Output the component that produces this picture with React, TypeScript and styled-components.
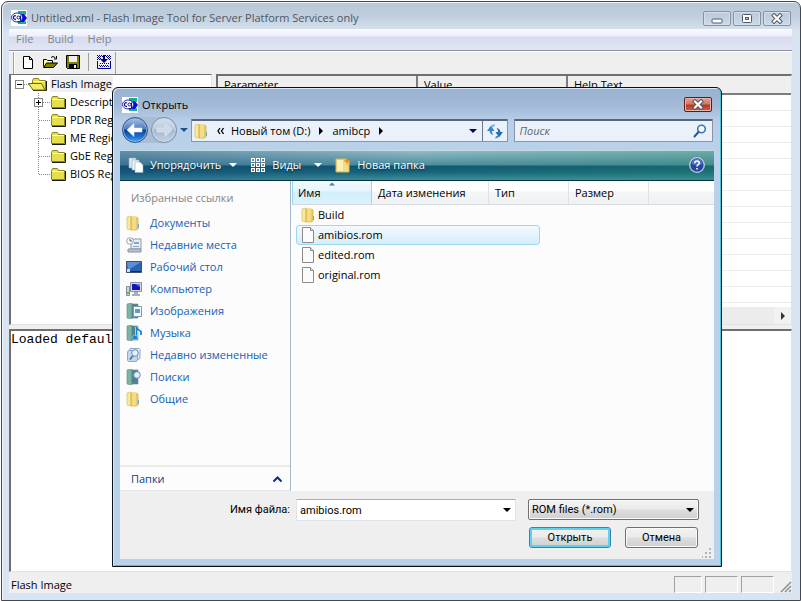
import React from "react";
import styled, { createGlobalStyle, css } from "styled-components";

const ui = `"Open Sans", "Noto Sans", sans-serif`;
const classic = `Roboto, "Liberation Sans", sans-serif`;

const GlobalStyle = createGlobalStyle`
  *, *::before, *::after { box-sizing: border-box; }
  body { margin: 0; background: #fff; font: 11px/16px ${ui}; color: #000; overflow: hidden; }
  button, input, select { font: inherit; color: inherit; margin: 0; padding: 0; }
  svg { display: block; flex: none; }
  ul { list-style: none; margin: 0; padding: 0; }
`;

/* ---------- main window ---------- */

const Desktop = styled.div`
  position: relative;
  min-height: 100vh;
  padding: 1px 0 0 1px;
  display: flex;
`;

const AppWindow = styled.main`
  flex: 1;
  min-width: 0;
  display: flex;
  flex-direction: column;
  padding: 0 8px 7px 7px;
  border: 1px solid #45484e;
  border-radius: 7px 7px 0 0;
  background: linear-gradient(#b8c8d8 0, #bfcddc 14px, #d8e4f1 30px);
  box-shadow: inset 1px 1px 0 #eef4fa;
`;

const TitleBar = styled.header`
  display: flex;
  align-items: center;
  height: 27px;
  padding: 5px 1px 0 2px;
  gap: 4px;
  color: #4c5866;
`;

const Title = styled.h1`
  flex: 1;
  margin: 0;
  font-size: 11px;
  font-weight: 400;
  white-space: nowrap;
`;

const CaptionButtons = styled.div`
  display: flex;
  gap: 2px;
`;

const CaptionButton = styled.button`
  display: grid;
  place-items: center;
  width: 28px;
  height: 15px;
  border: 1px solid #8592a5;
  border-radius: 2px;
  background: transparent;
  box-shadow: inset 0 0 0 1px #d6e0ec;
`;

const MenuBar = styled.nav`
  display: flex;
  height: 22px;
  gap: 14px;
  padding: 1px 7px 3px;
  border-bottom: 1px solid #8e93a0;
  background: linear-gradient(#fafbfe 0, #eceef9 7px, #d8dbf0 8px, #e2e5f5 20px);
`;

const MenuItem = styled.button`
  border: 0;
  background: none;
  color: #80858c;
`;

const ToolStrip = styled.div`
  display: flex;
  align-items: center;
  height: 23px;
  border-top: 1px solid #fff;
  background: #efefef;
  padding-left: 4px;
`;

const ToolGroup = styled.div`
  display: flex;
  align-items: center;
  align-self: stretch;
  gap: 7px;
  padding: 0 3px 3px 7px;
  border-left: 1px solid #a0a0a0;
  border-right: 1px solid #a0a0a0;
  box-shadow: inset 1px 0 0 #fff;
`;

const ToolButton = styled.button`
  border: 0;
  background: none;
`;

const ToolSeparator = styled.span`
  width: 1px;
  height: 18px;
  background: #a0a0a0;
`;

const Panels = styled.div`
  flex: 252 0 0;
  min-height: 0;
  display: grid;
  grid-template-columns: 203px minmax(0, 1fr);
  gap: 4px;
  background: #efefef;
`;

const sunken = css`
  border: 1px solid #e3e3e3;
  border-top: 2px solid #6f6f6f;
  border-left: 2px solid #6f6f6f;
  background: #fff;
`;

const TreePanel = styled.section`
  ${sunken}
  border-top-width: 1px;
  overflow: hidden;
  padding-left: 4px;
`;

const TreeRow = styled.div<{ $child?: boolean }>`
  display: flex;
  align-items: center;
  height: 18px;
  gap: 3px;
  white-space: nowrap;
  padding-left: ${(p) => (p.$child ? "19px" : "0")};
`;

const TreeLabel = styled.span<{ $selected?: boolean }>`
  padding: 0 1px;
  background: ${(p) => (p.$selected ? "#f0f0f0" : "transparent")};
`;

const GridPanel = styled.section`
  ${sunken}
  display: flex;
  flex-direction: column;
  overflow: hidden;
`;

const GridBody = styled.div`
  flex: 1;
  min-height: 0;
  overflow: hidden;
`;

const GridTable = styled.table`
  width: 100%;
  table-layout: fixed;
  border-collapse: collapse;
  border-bottom: 1px solid #ececec;
  th {
    height: 18px;
    padding: 1px 6px 0;
    text-align: left;
    font-weight: 400;
    background: #efefef;
    border-right: 2px solid #7c7c7c;
    border-bottom: 2px solid #7c7c7c;
  }
  th:last-child { border-right: 0; }
  td { height: 16px; padding: 0; border-bottom: 1px solid #ececec; }
`;

const GridCol = styled.col<{ $w?: number }>`
  width: ${(p) => (p.$w ? `${p.$w}px` : "auto")};
`;

const ScrollTrack = styled.div`
  display: flex;
  justify-content: flex-end;
  height: 17px;
  background: #ececec;
`;

const ScrollButton = styled.button`
  width: 17px;
  border: 0;
  background: #f2f2f2;
  display: grid;
  place-items: center;
`;

const LogPanel = styled.section`
  ${sunken}
  flex: 240 0 0;
  margin-top: 4px;
  font: 13px/17px "Liberation Mono", monospace;
  overflow: hidden;
`;

const MainBody = styled.div`
  flex: 1;
  min-height: 0;
  display: flex;
  flex-direction: column;
  background: #efefef;
`;

const StatusBar = styled.footer`
  display: flex;
  align-items: flex-end;
  gap: 3px;
  height: 21px;
  padding-left: 2px;
  background: #efefef;
`;

const StatusText = styled.span`
  flex: 1;
`;

const StatusPane = styled.span<{ $w: number }>`
  width: ${(p) => p.$w}px;
  height: 17px;
  border: 1px solid #fff;
  border-top-color: #a0a0a0;
  border-left-color: #a0a0a0;
`;

/* ---------- dialog ---------- */

const Dialog = styled.section`
  position: absolute;
  top: 87px;
  left: 112px;
  right: 79px;
  bottom: 34px;
  display: flex;
  flex-direction: column;
  padding: 0 7px 7px;
  border: 1px solid #05121c;
  border-radius: 6px 6px 0 0;
  background: linear-gradient(#98b1cf 0, #a3bbd8 18px, #b9cfe9 34px, #b9d1ea 64px);
  box-shadow: inset 1px 1px 0 #dce9f6, inset -1px -1px 0 #4cc3df;
`;

const DialogTitle = styled.header`
  display: flex;
  align-items: center;
  height: 29px;
  padding: 4px 2px 0;
  gap: 4px;
`;

const CloseButton = styled.button`
  display: grid;
  place-items: center;
  width: 28px;
  height: 15px;
  border: 1px solid #5b1c1c;
  border-radius: 2px;
  background: linear-gradient(#e2a195 0, #cf7867 6px, #b23a22 7px, #d2705a 15px);
  box-shadow: inset 0 0 0 1px #e6b4a8;
`;

const NavRow = styled.div`
  display: flex;
  align-items: center;
  height: 26px;
  gap: 3px;
  padding: 0 1px 0 2px;
`;

const TravelGroup = styled.div`
  display: flex;
  gap: 3px;
  border-radius: 13px;
  background: #a9bdd6;
`;

const TravelButton = styled.button<{ $active?: boolean }>`
  display: grid;
  place-items: center;
  width: 26px;
  height: 26px;
  border-radius: 50%;
  border: 1px solid ${(p) => (p.$active ? "#35588c" : "#7d8ea8")};
  background: ${(p) =>
    p.$active
      ? "linear-gradient(#a8c2e4 0, #4b7cc0 11px, #0a3f94 12px, #1d7ddb 20px, #5fc4f5 25px)"
      : "linear-gradient(#d3deec 0, #bccbdf 11px, #a6b8d1 12px, #c5d3e5 25px)"};
  box-shadow: inset 0 0 0 1px ${(p) => (p.$active ? "#8fb3e0" : "#d2deec")};
`;

const PlainButton = styled.button`
  display: grid;
  place-items: center;
  border: 0;
  background: none;
`;

const fieldFrame = css`
  height: 23px;
  border: 1px solid #8795aa;
  border-top: 2px solid #58657a;
  border-radius: 1px;
  background: #eaf1fa;
`;

const AddressBar = styled.div`
  ${fieldFrame}
  flex: 5 0 0;
  min-width: 0;
  display: flex;
  align-items: stretch;
  margin-right: 3px;
  padding-left: 2px;
`;

const Crumbs = styled.div`
  flex: 1;
  min-width: 0;
  display: flex;
  align-items: center;
  gap: 7px;
  white-space: nowrap;
`;

const Crumb = styled.button`
  border: 0;
  background: none;
`;

const AddressButton = styled(PlainButton)<{ $divided?: boolean }>`
  width: ${(p) => (p.$divided ? "25px" : "18px")};
  border-left: ${(p) => (p.$divided ? "1px solid #6a778c" : "0")};
`;

const SearchBox = styled.label`
  ${fieldFrame}
  flex: 3 0 0;
  min-width: 0;
  display: flex;
  align-items: center;
  padding: 0 5px;
`;

const SearchInput = styled.input`
  flex: 1;
  min-width: 0;
  border: 0;
  outline: 0;
  background: none;
  &::placeholder { color: #5c6470; font-style: italic; opacity: 1; }
`;

const CommandBar = styled.div`
  display: flex;
  align-items: center;
  height: 31px;
  margin-top: 7px;
  padding: 0 9px 2px 8px;
  gap: 13px;
  color: #fff;
  border-top: 1px solid #c5dbe4;
  border-bottom: 1px solid #06323f;
  background:
    linear-gradient(90deg, rgba(20, 60, 120, 0.35), rgba(20, 60, 120, 0) 50%, rgba(40, 140, 110, 0.35)),
    linear-gradient(#8fbcc5 0, #4e8c9d 14px, #0f566f 15px, #16647a 21px, #3f909b 29px);
`;

const Command = styled.button<{ $gap: number }>`
  display: flex;
  align-items: center;
  gap: 6px;
  border: 0;
  background: none;
  text-shadow: 0 1px 2px #06303f;
  white-space: nowrap;
  svg:last-child:not(:first-child) { margin-left: ${(p) => p.$gap}px; }
`;

const HelpButton = styled(PlainButton)`
  margin-left: auto;
`;

const Browser = styled.div`
  flex: 1;
  min-height: 0;
  display: grid;
  grid-template-columns: 171px minmax(0, 1fr);
  background: #fcfcfc;
`;

const Places = styled.aside`
  display: flex;
  flex-direction: column;
  border-right: 1px solid #a9b8c9;
  border-bottom: 1px solid #e3e7ec;
`;

const PlacesHeading = styled.h2`
  margin: 0;
  padding: 9px 11px 6px;
  font-size: 11px;
  font-weight: 400;
  color: #858585;
`;

const PlaceLink = styled.a`
  display: flex;
  align-items: center;
  height: 22px;
  padding-left: 6px;
  gap: 8px;
  color: #1560b5;
  text-decoration: none;
  white-space: nowrap;
`;

const FoldersToggle = styled.button`
  display: flex;
  align-items: center;
  justify-content: space-between;
  height: 25px;
  margin-top: auto;
  padding: 0 7px 0 11px;
  border: 0;
  border-top: 2px solid #ebebeb;
  background: none;
  color: #123e8c;
`;

const FileTable = styled.table`
  width: 100%;
  table-layout: fixed;
  border-collapse: separate;
  border-spacing: 0;
  padding-left: 1px;
`;

const ColumnHead = styled.th<{ $sorted?: boolean }>`
  height: 24px;
  padding: 0 6px 4px;
  text-align: left;
  vertical-align: top;
  font-weight: 400;
  white-space: nowrap;
  border-bottom: 1px solid #d5d9de;
  border-right: 1px solid #e0e2e5;
  background: linear-gradient(#fff 0, #fff 10px, #f4f5f6 11px, #f1f2f4 22px);
  &:last-child { border-right: 0; }
  ${(p) =>
    p.$sorted &&
    css`
      padding-left: 5px;
      background: linear-gradient(#f1fafe 0, #e6f6fd 10px, #d3effb 11px, #d9f2fc 22px);
      border-right-color: #96d9f0;
      border-left: 1px solid #96d9f0;
    `}
`;

const SortMark = styled.span`
  display: flex;
  justify-content: center;
  height: 4px;
`;

const HeadText = styled.span`
  display: block;
  line-height: 15px;
`;

const FileArea = styled.div`
  min-width: 0;
`;

const FileList = styled.ul`
  width: 59%;
  padding: 0 1px 0 5px;
`;

const FileItem = styled.li<{ $selected?: boolean }>`
  display: flex;
  align-items: center;
  height: 20px;
  padding-left: 4px;
  gap: 3px;
  border: 1px solid ${(p) => (p.$selected ? "#9fd8ee" : "transparent")};
  border-radius: 3px;
  background: ${(p) => (p.$selected ? "linear-gradient(#f3fafe, #d5edf9)" : "none")};
`;

const DialogFooter = styled.form`
  display: grid;
  grid-template-columns: 170px minmax(0, 220px) minmax(0, 171px);
  column-gap: 6px;
  row-gap: 6px;
  align-content: start;
  height: 68px;
  padding-top: 8px;
  background: #efefef;
  font: 11px/14px ${classic};
`;

const FieldLabel = styled.label`
  align-self: center;
  text-align: right;
  white-space: nowrap;
`;

const ComboBox = styled.div`
  display: flex;
  height: 22px;
  border: 1px solid #e0e3e8;
  border-top-color: #abadb3;
  background: #fff;
`;

const ComboInput = styled.input`
  flex: 1;
  min-width: 0;
  padding: 2px 0 0 3px;
  border: 0;
  outline: 0;
  background: none;
`;

const ComboArrow = styled(PlainButton)`
  width: 16px;
`;

const SelectWrap = styled.div`
  display: grid;
  margin-left: 6px;
  margin-right: -6px;
  align-items: start;
  > * { grid-area: 1 / 1; }
  > svg { justify-self: end; margin: 7px 5px 0 0; pointer-events: none; }
`;

const FilterSelect = styled.select`
  appearance: none;
  height: 21px;
  padding: 0 3px;
  border: 1px solid #707070;
  border-radius: 2px;
  background: linear-gradient(#f2f2f2 0, #ebebeb 9px, #dddddd 10px, #cfcfcf 20px);
  box-shadow: inset 0 0 0 1px #fafafa;
`;

const Actions = styled.div`
  grid-column: 1 / 4;
  display: flex;
  justify-content: flex-end;
  gap: 14px;
  margin-right: -5px;
`;

const ActionButton = styled.button<{ $primary?: boolean }>`
  width: ${(p) => (p.$primary ? "82px" : "73px")};
  height: 21px;
  border: 1px solid ${(p) => (p.$primary ? "#3c7fb1" : "#707070")};
  border-radius: 3px;
  background: linear-gradient(#f2f2f2 0, #ebebeb 9px, #dddddd 10px, #cfcfcf 20px);
  box-shadow: inset 0 0 0 ${(p) => (p.$primary ? "2px #5cd2f3" : "1px #fafafa")};
`;

const DialogGrip = styled.span`
  position: absolute;
  right: 9px;
  bottom: 8px;
`;

/* ---------- icons ---------- */

const AppIcon = () => (
  <svg width="16" height="16" viewBox="0 0 16 16">
    <rect width="16" height="16" fill="#fff" />
    <path d="M7 1h8v4l-3-1H7z" fill="#18b07c" />
    <path d="M7 14h8v-3l-3 1H7z" fill="#18b07c" />
    <path d="M8 4h5l3 4-3 4H8z" fill="#0808e8" />
    <ellipse cx="6" cy="7.500" rx="5.500" ry="4.500" fill="#fff" stroke="#2a2ab4" />
    <path d="M5 6q-2-1-2.500 1.200T5 9.500" fill="none" stroke="#10109c" strokeWidth="1.300" />
    <circle cx="7.500" cy="7.500" r="1.500" fill="#fff" stroke="#10109c" />
    <path d="M9.500 5.500v5q-1 2-3 1" fill="none" stroke="#10109c" />
  </svg>
);

const NewIcon = () => (
  <svg width="14" height="16" viewBox="0 0 14 16">
    <path d="M2.500 2.500h6l3 3v9h-9zM8.500 2.500v3h3" fill="#fff" stroke="#000" />
  </svg>
);

const OpenIcon = () => (
  <svg width="16" height="16" viewBox="0 0 16 16">
    <path d="M1.500 12.500v-7h3l1 1h5v3" fill="#ffffa8" stroke="#000" />
    <path d="M1.500 13.500l3-4.500h11l-4 4.500z" fill="#808000" stroke="#000" />
    <path d="M9 3.500q2-2 4 0l1 1M14.500 2v3H12" fill="none" stroke="#000" />
  </svg>
);

const SaveIcon = () => (
  <svg width="16" height="16" viewBox="0 0 16 16">
    <path d="M1.500 1.500h13v13h-12l-1-1z" fill="#808000" stroke="#000" />
    <path d="M4 2h8v6H4z" fill="#efefef" />
    <path d="M4 10h8v4H4z" fill="#000" />
    <path d="M9 11h2v3H9z" fill="#efefef" />
  </svg>
);

const BuildIcon = () => (
  <svg width="16" height="16" viewBox="0 0 16 16" fill="none" stroke="#000080">
    <path d="M1 1.500h14M2 2.500h13M1 3.500h4M11 3.500h4M2 4.500h3M12 4.500h3M1 5.500h3M13 5.500h2" strokeDasharray="1 1" />
    <path d="M7 1h2v4h3L8 9 4 5h3z" fill="#000080" stroke="none" />
    <path d="M1.500 7v7.500h13V7" />
    <path d="M4 9.500h9M3 11.500h10M4 12.500h9" strokeDasharray="1 1" />
  </svg>
);

const TreeBox = ({ plus }: { plus?: boolean }) => (
  <svg width="9" height="18" viewBox="0 0 9 18">
    {plus && <path d="M4.500 0v5M4.500 14v4" stroke="#888" strokeDasharray="1 1" />}
    <rect x=".5" y="5.500" width="8" height="8" fill="#fff" stroke="#848484" />
    <path d={plus ? "M2 9.500h5M4.500 7v5" : "M2 9.500h5"} stroke="#000" />
  </svg>
);

const TreeBranch = ({ last }: { last?: boolean }) => (
  <svg width="9" height="18" viewBox="0 0 9 18">
    <path d={last ? "M4.500 0v10M5 9.500h4" : "M4.500 0v18M5 9.500h4"} fill="none" stroke="#888" strokeDasharray="1 1" />
  </svg>
);

const TreeFolder = ({ open }: { open?: boolean }) => (
  <svg width="20" height="16" viewBox="0 0 20 16" overflow="visible">
    <path d="M-3 8.500h7" stroke="#888" strokeDasharray="1 1" />
    <path d="M5.500 4.500l1-2h5l1 2h6v9h-13z" fill="#e4df4a" stroke="#8a8420" />
    <path d="M6.500 5.500H18" stroke="#ffffb8" />
    <path d="M6 14.500h13.500V5" fill="none" stroke="#1c1c00" />
    {open && <path d="M1.500 7.500h13l3.500 6.500H6z" fill="#f2ee62" stroke="#6f6a00" />}
  </svg>
);

const WindowGlyph = ({ kind }: { kind: "min" | "max" | "close" }) => (
  <svg width="12" height="11" viewBox="0 0 12 11">
    {kind === "min" && <rect x="1" y="6" width="10" height="4" rx="1" fill="#fff" stroke="#505a6c" />}
    {kind === "max" && (
      <>
        <rect x="1.500" y="1.500" width="9" height="8" rx="1" fill="#fff" stroke="#505a6c" />
        <rect x="4.500" y="4.500" width="3" height="2" fill="#c3d0de" stroke="#505a6c" />
      </>
    )}
    {kind === "close" && (
      <>
        <path d="M3 2.500l6 6M9 2.500l-6 6" stroke="#4a5262" strokeWidth="4" strokeLinecap="square" />
        <path d="M3 2.500l6 6M9 2.500l-6 6" stroke="#fff" strokeWidth="2.200" strokeLinecap="square" />
      </>
    )}
  </svg>
);

const Arrow = ({ dir, color = "#000", size = 8 }: { dir: "down" | "right" | "up"; color?: string; size?: number }) => (
  <svg width={size} height={size} viewBox="0 0 8 8">
    <path d={{ down: "M0 2h8L4 6z", right: "M2 0v8l4-4z", up: "M0 6h8L4 2z" }[dir]} fill={color} />
  </svg>
);

const TravelArrow = ({ back }: { back?: boolean }) => (
  <svg width="16" height="14" viewBox="0 0 16 14">
    <path
      d={back ? "M0 7l7-6.500v4.500h8v4H7v4.500z" : "M16 7L9 .5V5H1v4h8v4.500z"}
      fill={back ? "#fff" : "#cfd8e4"}
      stroke={back ? "#dbe8f8" : "#e4ebf3"}
      strokeWidth=".6"
    />
  </svg>
);

const VistaFolder = ({ width = 16 }: { width?: number }) => (
  <svg width={width} height="16" viewBox={`1 0 ${width} 16`}>
    <path d="M2 2l4-1v14l-4-1z" fill="#f7e9a0" stroke="#dcbf58" strokeWidth=".7" />
    <path d="M6 2h5l2 1v11l-2 1H6z" fill="#eacb62" stroke="#d3ae45" strokeWidth=".7" />
    <path d="M7 1l4 1v12l-4 1z" fill="#f3dc86" />
    <path d="M13.500 9v4" stroke="#68a8cc" />
  </svg>
);

const FileIcon = () => (
  <svg width="14" height="17" viewBox="0 0 14 17">
    <path d="M1.500 .5h8l3 3v12h-11z" fill="#fbfbfb" stroke="#8a8a8a" />
    <path d="M9.500 .5v3h3" fill="#e4e4e4" stroke="#8a8a8a" />
  </svg>
);

const RefreshIcon = () => (
  <svg width="16" height="16" viewBox="0 0 16 16">
    <path d="M4 2.500L0 8h2.500c.3 2.500 1.500 3.500 4 4-1-1.200-1.500-2.300-1.500-4h2.500z" fill="#3b86c8" />
    <path d="M3.500 3.500Q5 1 8 1L7 4z" fill="#74b4e2" />
    <path d="M12 14.500L16 9h-2.500c-.3-2.500-1.500-3.500-4-4 1 1.200 1.500 2.300 1.500 4H8.500z" fill="#2a6cb0" />
    <path d="M12.500 13Q11 15.500 8 15.500L9 13z" fill="#4f92ce" />
  </svg>
);

const SearchIcon = () => (
  <svg width="14" height="14" viewBox="0 0 14 14" fill="none">
    <circle cx="8.500" cy="5" r="3.800" fill="#f4faff" stroke="#3a76b8" strokeWidth="1.600" />
    <path d="M5.500 8L1.500 12.500" stroke="#28549c" strokeWidth="2" strokeLinecap="round" />
  </svg>
);

const OrganizeIcon = () => (
  <svg width="16" height="16" viewBox="0 0 16 16" stroke="#8ba8b8" strokeWidth=".6">
    <path d="M1 1h7v10H1z" fill="#dfe8ee" />
    <path d="M4 3h7v10H4z" fill="#eef3f6" />
    <path d="M7 5h5l3 3v7.500H7z" fill="#fff" />
  </svg>
);

const ViewsIcon = () => (
  <svg width="16" height="16" viewBox="0 0 16 16">
    {[0, 1, 2].map((r) =>
      [0, 1, 2].map((c) => (
        <g key={`${r}${c}`}>
          <rect x={1 + c * 5} y={1 + r * 5} width="4" height="4" fill="#fff" />
          <rect x={2 + c * 5} y={2 + r * 5} width="2" height="2" fill={["#6d9c8c", "#4f7fb0", "#b86a5c"][(r + c) % 3]} />
        </g>
      ))
    )}
  </svg>
);

const NewFolderIcon = () => (
  <svg width="16" height="16" viewBox="0 0 16 16">
    <path d="M1 2h9l4 2v11H1z" fill="#f2dd84" stroke="#d8b850" />
    <path d="M2 3h6v11H2z" fill="#faf0b8" />
    <path d="M12 0l1 3 3 1-3 1-1 3-1-3-3-1 3-1z" fill="#f08a1c" />
  </svg>
);

const HelpIcon = () => (
  <svg width="16" height="16" viewBox="0 0 16 16">
    <circle cx="8" cy="8" r="7.300" fill="#2447a8" stroke="#c4cce0" strokeWidth="1.300" />
    <path d="M2.500 7a5.500 5.500 0 0 1 11 0q-5 2-11 0z" fill="#5674c0" />
    <path d="M5.800 6.200q0-2.200 2.200-2.200t2.200 2q0 1.200-1.200 1.900-1 .6-1 1.600M8 11v1.600" fill="none" stroke="#fff" strokeWidth="1.600" />
  </svg>
);

const ChevronUp = () => (
  <svg width="11" height="8" viewBox="0 0 11 8">
    <path d="M1.500 6.500l4-4 4 4" fill="none" stroke="#0c2f7c" strokeWidth="2" />
  </svg>
);

const Book = ({ children }: { children?: React.ReactNode }) => (
  <svg width="16" height="16" viewBox="0 0 16 16">
    <path d="M1 1l5-1v16l-5-1z" fill="#7ab5a4" stroke="#5a8a88" strokeWidth=".6" />
    <path d="M6 1h6v14H6z" fill="#4d8494" stroke="#5a8a88" strokeWidth=".6" />
    {children}
  </svg>
);

const Lens = ({ x = 0 }: { x?: number }) => (
  <g transform={`translate(${x} 0)`}>
    <path d="M8 8.500L5 12.500" stroke="#5c7590" strokeWidth="1.800" />
    <circle cx="10" cy="6" r="3.300" fill="#e4f1fb" stroke="#6f8cb0" />
  </g>
);

const placeIcons: Record<string, React.ReactNode> = {
  folder: <VistaFolder />,
  recent: (
    <svg width="16" height="16" viewBox="0 0 16 16">
      <path d="M5 2h10v10H5z" fill="#e9eef4" stroke="#8a98a8" />
      <path d="M8 5h5v2H8zM7 9h6v1H7z" fill="#7fa9cc" />
      <path d="M2 12h13v3H2z" fill="#bcc4cc" stroke="#89929c" />
      <circle cx="4" cy="4" r="3.300" fill="#fff" stroke="#98a2ae" />
      <path d="M4 2v2h2" fill="none" stroke="#4a5866" />
    </svg>
  ),
  desktop: (
    <svg width="16" height="16" viewBox="0 0 16 16">
      <path d="M.5 2.500h15v11H.5z" fill="#2a62b4" stroke="#40506a" />
      <path d="M1 3h14L2 11z" fill="#5b90d4" />
      <path d="M1 12.500h14" stroke="#1b2c48" />
      <path d="M1 10h3v3H1z" fill="#bfe4f7" />
    </svg>
  ),
  computer: (
    <svg width="16" height="16" viewBox="0 0 16 16">
      <path d="M4.500 1.500h11v9h-11z" fill="#d5d9e2" stroke="#8a909c" />
      <path d="M6 3h8v6H6z" fill="#1414b4" />
      <path d="M9 3h5v3z" fill="#5a78e4" />
      <path d="M8 11h4v2h2v2H6v-2h2z" fill="#a8b0bc" />
      <path d="M.5 5.500h3v9h-3z" fill="#cfd4da" stroke="#848c94" />
      <path d="M1 11h2v2H1z" fill="#4cbf5c" />
    </svg>
  ),
  pictures: (
    <Book>
      <path d="M7.500 3.500h8v10h-8z" fill="#f6f9fc" stroke="#7e98ac" />
      <path d="M9 6h5v4H9z" fill="#5f9cc8" />
    </Book>
  ),
  music: (
    <Book>
      <path d="M10.500 12.500V2q1 3 4.500 4.500V10" fill="none" stroke="#fff" strokeWidth="3" />
      <path d="M10.500 12.500V2q1 3 4.500 4.500V10" fill="none" stroke="#1784d8" strokeWidth="1.800" />
      <ellipse cx="9" cy="12.500" rx="2.800" ry="2.300" fill="#1784d8" stroke="#cfe6f7" strokeWidth=".5" />
    </Book>
  ),
  changed: (
    <svg width="16" height="16" viewBox="0 0 16 16">
      <path d="M4 1.500h9l1 1v9l-2 1H4z" fill="#dceaf7" stroke="#8fa9cc" />
      <path d="M1.500 5l1-1.500h9V13l-1 1.500h-8l-1-1z" fill="#c3d8f0" stroke="#8fa9cc" />
      <Lens x={-1} />
    </svg>
  ),
  searches: (
    <Book>
      <Lens x={1} />
    </Book>
  ),
};

/* ---------- data ---------- */

const regions = ["Descriptor", "PDR Region", "ME Region", "GbE Region", "BIOS Region"];

const places = [
  ["Документы", "folder"],
  ["Недавние места", "recent"],
  ["Рабочий стол", "desktop"],
  ["Компьютер", "computer"],
  ["Изображения", "pictures"],
  ["Музыка", "music"],
  ["Недавно измененные", "changed"],
  ["Поиски", "searches"],
  ["Общие", "folder"],
];

const files = ["Build", "amibios.rom", "edited.rom", "original.rom"];

/* ---------- composition ---------- */

const MainWindow = () => (
  <AppWindow>
    <TitleBar>
      <AppIcon />
      <Title>Untitled.xml - Flash Image Tool for Server Platform Services only</Title>
      <CaptionButtons>
        <CaptionButton aria-label="Minimize"><WindowGlyph kind="min" /></CaptionButton>
        <CaptionButton aria-label="Maximize"><WindowGlyph kind="max" /></CaptionButton>
        <CaptionButton aria-label="Close"><WindowGlyph kind="close" /></CaptionButton>
      </CaptionButtons>
    </TitleBar>
    <MenuBar>
      {["File", "Build", "Help"].map((m) => <MenuItem key={m}>{m}</MenuItem>)}
    </MenuBar>
    <ToolStrip>
      <ToolGroup>
        <ToolButton aria-label="New"><NewIcon /></ToolButton>
        <ToolButton aria-label="Open"><OpenIcon /></ToolButton>
        <ToolButton aria-label="Save"><SaveIcon /></ToolButton>
        <ToolSeparator />
        <ToolButton aria-label="Build image"><BuildIcon /></ToolButton>
      </ToolGroup>
    </ToolStrip>
    <MainBody>
      <Panels>
        <TreePanel>
          <TreeRow>
            <TreeBox />
            <TreeFolder open />
            <TreeLabel $selected>Flash Image</TreeLabel>
          </TreeRow>
          {regions.map((r, i) => (
            <TreeRow key={r} $child>
              {i === 0 ? <TreeBox plus /> : <TreeBranch last={i === regions.length - 1} />}
              <TreeFolder />
              <TreeLabel>{r}</TreeLabel>
            </TreeRow>
          ))}
        </TreePanel>
        <GridPanel>
          <GridBody>
            <GridTable>
              <colgroup>
                <GridCol $w={199} />
                <GridCol $w={150} />
                <GridCol />
              </colgroup>
              <thead>
                <tr><th>Parameter</th><th>Value</th><th>Help Text</th></tr>
              </thead>
              <tbody>
                {Array.from({ length: 13 }, (_, i) => (
                  <tr key={i}><td colSpan={3} /></tr>
                ))}
              </tbody>
            </GridTable>
          </GridBody>
          <ScrollTrack>
            <ScrollButton aria-label="Scroll right"><Arrow dir="right" color="#333" /></ScrollButton>
          </ScrollTrack>
        </GridPanel>
      </Panels>
      <LogPanel>Loaded default</LogPanel>
    </MainBody>
    <StatusBar>
      <StatusText>Flash Image</StatusText>
      <StatusPane $w={28} />
      <StatusPane $w={33} />
      <StatusPane $w={33} />
      <svg width="15" height="14" viewBox="0 0 15 14">
        <path d="M4 13L14 3M8 13l6-6M12 13l2-2" stroke="#8e8e8e" strokeWidth="1.500" />
      </svg>
    </StatusBar>
  </AppWindow>
);

const OpenDialog = () => (
  <Dialog role="dialog" aria-label="Открыть">
    <DialogTitle>
      <AppIcon />
      <Title as="h2">Открыть</Title>
      <CloseButton aria-label="Закрыть"><WindowGlyph kind="close" /></CloseButton>
    </DialogTitle>
    <NavRow>
      <TravelGroup>
        <TravelButton $active aria-label="Назад"><TravelArrow back /></TravelButton>
        <TravelButton aria-label="Вперед"><TravelArrow /></TravelButton>
      </TravelGroup>
      <PlainButton aria-label="Журнал"><Arrow dir="down" color="#1f5288" /></PlainButton>
      <AddressBar>
        <Crumbs>
          <VistaFolder />
          <Crumb aria-label="Выше">
            <svg width="7" height="8" viewBox="0 0 7 8">
              <path d="M3 1L1 4l2 3M6.500 1l-2 3 2 3" fill="none" stroke="#000" strokeWidth="1.300" />
            </svg>
          </Crumb>
          <Crumb>Новый том (D:)</Crumb>
          <Arrow dir="right" />
          <Crumb>amibcp</Crumb>
          <Arrow dir="right" />
        </Crumbs>
        <AddressButton aria-label="Адреса"><Arrow dir="down" color="#06065c" /></AddressButton>
        <AddressButton $divided aria-label="Обновить"><RefreshIcon /></AddressButton>
      </AddressBar>
      <SearchBox>
        <SearchInput type="search" placeholder="Поиск" aria-label="Поиск" />
        <SearchIcon />
      </SearchBox>
    </NavRow>
    <CommandBar>
      <Command $gap={2}><OrganizeIcon />Упорядочить<Arrow dir="down" color="#fff" /></Command>
      <Command $gap={7}><ViewsIcon />Виды<Arrow dir="down" color="#fff" /></Command>
      <Command $gap={0}><NewFolderIcon /><span>Новая папка</span></Command>
      <HelpButton aria-label="Справка"><HelpIcon /></HelpButton>
    </CommandBar>
    <Browser>
      <Places>
        <PlacesHeading>Избранные ссылки</PlacesHeading>
        {places.map(([name, icon]) => (
          <PlaceLink key={name} href="#">{placeIcons[icon]}{name}</PlaceLink>
        ))}
        <FoldersToggle>Папки<ChevronUp /></FoldersToggle>
      </Places>
      <FileArea>
        <FileTable>
          <colgroup>
            <GridCol $w={80} />
            <GridCol $w={117} />
            <GridCol $w={80} />
            <GridCol $w={80} />
            <GridCol />
          </colgroup>
          <thead>
            <tr>
              {["Имя", "Дата изменения", "Тип", "Размер", ""].map((h, i) => (
                <ColumnHead key={h} $sorted={i === 0}>
                  <SortMark>{i === 0 && <Arrow dir="up" color="#4c7d9c" size={6} />}</SortMark>
                  <HeadText>{h}</HeadText>
                </ColumnHead>
              ))}
            </tr>
          </thead>
        </FileTable>
        <FileList>
          {files.map((f) => (
            <FileItem key={f} $selected={f === "amibios.rom"}>
              {f === "Build" ? <VistaFolder width={14} /> : <FileIcon />}
              {f}
            </FileItem>
          ))}
        </FileList>
      </FileArea>
    </Browser>
    <DialogFooter onSubmit={(e) => e.preventDefault()}>
      <FieldLabel htmlFor="filename">Имя файла:</FieldLabel>
      <ComboBox>
        <ComboInput id="filename" defaultValue="amibios.rom" />
        <ComboArrow type="button" aria-label="Показать список"><Arrow dir="down" /></ComboArrow>
      </ComboBox>
      <SelectWrap>
        <FilterSelect aria-label="Тип файлов">
          <option>ROM files (*.rom)</option>
        </FilterSelect>
        <Arrow dir="down" />
      </SelectWrap>
      <Actions>
        <ActionButton $primary>Открыть</ActionButton>
        <ActionButton type="button">Отмена</ActionButton>
      </Actions>
    </DialogFooter>
    <DialogGrip>
      <svg width="10" height="10" viewBox="0 0 10 10" fill="#b4b4b4">
        <path d="M7 0h2v2H7zM7 4h2v2H7zM7 8h2v2H7zM3 4h2v2H3zM3 8h2v2H3zM0 8h1v2H0z" />
      </svg>
    </DialogGrip>
  </Dialog>
);

export default function App() {
  return (
    <>
      <GlobalStyle />
      <Desktop>
        <MainWindow />
        <OpenDialog />
      </Desktop>
    </>
  );
}
